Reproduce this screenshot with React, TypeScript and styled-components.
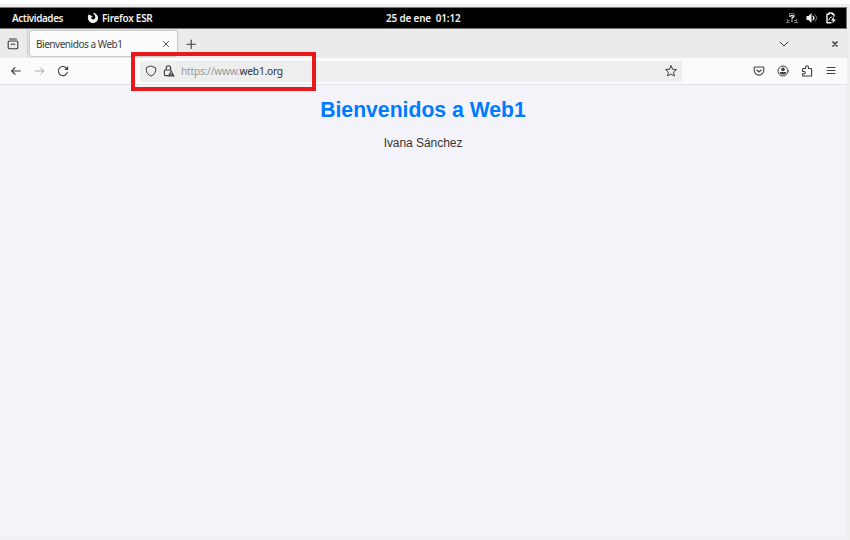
import React from "react";
import styled, { createGlobalStyle } from "styled-components";

const GlobalStyle = createGlobalStyle`
  * { box-sizing: border-box; }
  body { margin: 0; background: #efeff0; overflow: hidden; }
`;

const Screen = styled.div`
  position: relative;
  width: 850px;
  height: 540px;
  background: #efeff0;
  border-top: 4px solid #fff;
  padding-top: 3px;
  overflow: hidden;
  font-family: "Noto Sans", "Open Sans", sans-serif;
`;

const Desktop = styled.div`
  width: 847px;
  height: 530px;
  display: flex;
  flex-direction: column;
`;

const SystemBar = styled.header`
  height: 22px;
  flex: none;
  background: #000;
  border: solid #77777a;
  border-width: 1px 1px 1px 0;
  color: #f2f2f2;
  display: grid;
  grid-template-columns: 1fr auto 1fr;
  align-items: center;
  font-size: 9.9px;
  font-weight: 600;
  line-height: 18px;
  white-space: pre;
`;

const BarGroup = styled.div<{ $end?: boolean }>`
  display: flex;
  align-items: center;
  justify-content: ${(p) => (p.$end ? "flex-end" : "flex-start")};
  padding: ${(p) => (p.$end ? "0 9px 0 0" : "0 0 0 12px")};
  gap: ${(p) => (p.$end ? "6px" : "0")};
`;

const BarText = styled.span<{ $width: number; $spacing?: number; $gap?: number }>`
  width: ${(p) => p.$width}px;
  margin-left: ${(p) => p.$gap ?? 0}px;
  letter-spacing: ${(p) => p.$spacing ?? 0}px;
`;

const TabBar = styled.div`
  height: 29px;
  flex: none;
  background: #ebebeb;
  display: flex;
  align-items: center;
  color: #3b3b3e;
`;

const ViewButton = styled.div`
  width: 28px;
  height: 29px;
  padding-left: 7px;
  display: flex;
  align-items: center;
  border-right: 1px solid #cfcfd1;
`;

const Tab = styled.div`
  width: 147px;
  height: 25px;
  margin: 0 8px 0 2px;
  padding: 0 6px;
  display: flex;
  align-items: center;
  justify-content: space-between;
  background: #fcfcfc;
  border-radius: 2px;
  box-shadow: 0 0 2px rgba(0, 0, 0, 0.5);
  font-size: 10px;
  letter-spacing: -0.46px;
`;

const Spacer = styled.div`
  flex: 1;
`;

const Slot = styled.span<{ $width: number; $dim?: boolean }>`
  width: ${(p) => p.$width}px;
  flex: none;
  display: flex;
  align-items: center;
  justify-content: center;
  opacity: ${(p) => (p.$dim ? 0.42 : 1)};
`;

const Toolbar = styled.div`
  height: 27px;
  flex: none;
  background: #fbfbfb;
  border-bottom: 1px solid #e2e2e5;
  display: flex;
  align-items: center;
  color: #3f3f42;
  padding: 0 5px 0 3px;
`;

const AddressBar = styled.div`
  width: 542px;
  height: 21px;
  margin-left: 65px;
  display: flex;
  align-items: center;
  background: #eeeeee;
  border-radius: 2px;
  padding: 0 2px;
`;

const Url = styled.span`
  margin-left: 3px;
  font-size: 10.2px;
  letter-spacing: -0.24px;
  color: #98989a;
  white-space: nowrap;
`;

const Domain = styled.span`
  color: #303033;
`;

const Page = styled.main`
  flex: 1;
  background: #f4f3f9;
  font-family: "Liberation Sans", Arial, sans-serif;
  text-align: center;
  padding: 12px 1px 0 0;
`;

const Title = styled.h1`
  margin: 0;
  color: #007bff;
  font-size: 21.2px;
  line-height: 25px;
`;

const Author = styled.p`
  margin: 12px 0 0;
  color: #333;
  font-size: 12px;
  letter-spacing: -0.05px;
  line-height: 18px;
`;

const Highlight = styled.div`
  position: absolute;
  left: 131px;
  top: 48px;
  width: 185px;
  height: 39px;
  border: 4px solid #e8191c;
`;

const Glyph = styled.svg`
  display: block;
  flex: none;
  fill: none;
  stroke: currentColor;
  stroke-width: 1;
  stroke-linecap: round;
  stroke-linejoin: round;
`;

type IconProps = { children: React.ReactNode; w?: number; h?: number };
const Icon = ({ children, w = 12, h = 12 }: IconProps) => (
  <Glyph width={w} height={h} viewBox={`0 0 ${w} ${h}`}>{children}</Glyph>
);

export default function App() {
  return (
    <>
      <GlobalStyle />
      <Screen>
        <Desktop>
          <SystemBar>
            <BarGroup>
              <BarText $width={75} $spacing={-0.4}>Actividades</BarText>
              <Icon>
                <path d="M1.6 2.4C-.3 6 1.5 11 6 11s6.7-5.4 3.7-8.3C8.8 1.6 8 1.2 6.2.8c.7 1 .7 1.6 1.3 2.2 1.5 1.5.8 4.4-1.2 4.4-1.4 0-2.2-.8-2.2-1.9l1.7-.7L4.1 3.6z" fill="currentColor" stroke="none" />
              </Icon>
              <BarText $width={60} $gap={3} $spacing={-0.22}>Firefox ESR</BarText>
            </BarGroup>
            <BarText $width={74} $spacing={-0.14}>25 de ene  01:12</BarText>
            <BarGroup $end>
              <Icon w={14}>
                <g stroke="#737376" strokeLinecap="butt">
                  <path d="M4 1.5h5M4.5 2v3M9.5 2v3M2 8.5h3M9 8.5h3M1 10.5h4M9 10.5h4M2.5 7v3M11.5 7v3" />
                </g>
                <path d="M5.5 4.3c.2-1.3 3-1.3 3 .2 0 1-1.5.9-1.5 2.2M7 8.9v.3" strokeWidth="1.4" />
              </Icon>
              <Icon w={13}>
                <path d="M1.5 4h2L6.5 1v10l-3-3h-2z" fill="currentColor" stroke="none" />
                <path d="M8 4.2c1 1 1 2.6 0 3.6" strokeWidth="1.3" />
                <path d="M10 2.4c2 2 2 5.2 0 7.2" stroke="#77777a" />
              </Icon>
              <Icon w={13}>
                <path d="M10 4V2.2H8.3V1H5v1.2H3v8.5h4" strokeWidth="1.4" />
                <path d="M5 8c0-2 1.5-3 3-3" />
                <path d="M10 4.8L6.9 8.5h2L8.2 11.5l3.8-4H9.8z" fill="currentColor" stroke="none" />
              </Icon>
            </BarGroup>
          </SystemBar>

          <TabBar>
            <ViewButton>
              <Icon>
                <path d="M2.5 1h7M2.2 3h7.6q1 0 1 1v5.7q0 1-1 1H2.2q-1 0-1-1V4q0-1 1-1zM4.2 6.3h3.6" strokeWidth="1.1" />
              </Icon>
            </ViewButton>
            <Tab>
              Bienvenidos a Web1
              <Icon w={10} h={10}><path d="M2.5 2.5l5 5m0-5l-5 5" strokeWidth=".9" /></Icon>
            </Tab>
            <Icon><path d="M6.2 2v8.4M2 6.2h8.4" strokeWidth="1.1" /></Icon>
            <Spacer />
            <Slot $width={14}><Icon><path d="M2 4l4 4 4-4" /></Icon></Slot>
            <Slot $width={37} />
            <Slot $width={14}><Icon w={8} h={8}><path d="M2 2l4 4m0-4l-4 4" strokeWidth="1.7" /></Icon></Slot>
            <Slot $width={5} />
          </TabBar>

          <Toolbar>
            <Slot $width={25}><Icon><path d="M10.3 6H1.8M5 2.7L1.7 6 5 9.3" strokeWidth="1.2" /></Icon></Slot>
            <Slot $width={23} $dim><Icon><path d="M1.6 6h8.2M6.6 2.7L9.9 6 6.6 9.3" /></Icon></Slot>
            <Slot $width={24}>
              <Icon>
                <path d="M10.4 7.2A4.6 4.6 0 1 1 9 2.6L10.4 4.2" strokeWidth="1.1" />
                <path d="M11.2 1v3.9H7.3z" fill="currentColor" stroke="none" />
              </Icon>
            </Slot>
            <AddressBar>
              <Slot $width={18}>
                <Icon><path d="M6 1.1l4.6 1.7v2.6C10.6 8 8.8 9.9 6 11 3.2 9.9 1.4 8 1.4 5.4V2.8z" /></Icon>
              </Slot>
              <Slot $width={18}>
                <Icon>
                  <path d="M3.2 5V3a2.2 2.2 0 0 1 4.4 0V5M4.6 10.6H2.2q-.8 0-.8-.8V5.8q0-.8.8-.8h6" strokeWidth="1.1" />
                  <path d="M8.2 5l3.6 6.4H4.6z" fill="currentColor" stroke="none" />
                  <path d="M8.2 7.6v1.4m0 1v.1" stroke="#eee" strokeWidth=".8" />
                </Icon>
              </Slot>
              <Url>https://www.<Domain>web1.org</Domain></Url>
              <Spacer />
              <Slot $width={18}>
                <Icon><path d="M6 .8l1.6 3.4 3.8.4-2.8 2.5.8 3.8L6 9.1l-3.4 1.8.8-3.8L.6 4.6l3.8-.4z" /></Icon>
              </Slot>
            </AddressBar>
            <Spacer />
            <Slot $width={24}>
              <Icon><path d="M2.1 2h7.8q.9 0 .9.8v2.5a4.8 4.8 0 0 1-9.6 0V2.8q0-.8.9-.8zM3.8 5L6 7l2.2-2" strokeWidth="1.1" /></Icon>
            </Slot>
            <Slot $width={24}>
              <Icon>
                <circle cx="6" cy="6" r="5" />
                <circle cx="6" cy="4.4" r="1.8" fill="currentColor" stroke="none" />
                <path d="M2.7 6.9h6.6c0 3.6-6.6 3.6-6.6 0z" fill="currentColor" stroke="none" />
              </Icon>
            </Slot>
            <Slot $width={24}>
              <Icon>
                <path d="M1.6 4.3q0-.8.8-.8h2.2V2.2a1.4 1.4 0 0 1 2.8 0v1.3h2.4q.8 0 .8.8V11h-9V8.7h1.6a1.1 1.1 0 0 0 0-2.2H1.6z" strokeWidth="1.1" />
              </Icon>
            </Slot>
            <Slot $width={23}><Icon><path d="M2 2.5h8M2 5.5h8M2 8.5h8" /></Icon></Slot>
          </Toolbar>

          <Page>
            <Title>Bienvenidos a Web1</Title>
            <Author>Ivana Sánchez</Author>
          </Page>
        </Desktop>
        <Highlight />
      </Screen>
    </>
  );
}
